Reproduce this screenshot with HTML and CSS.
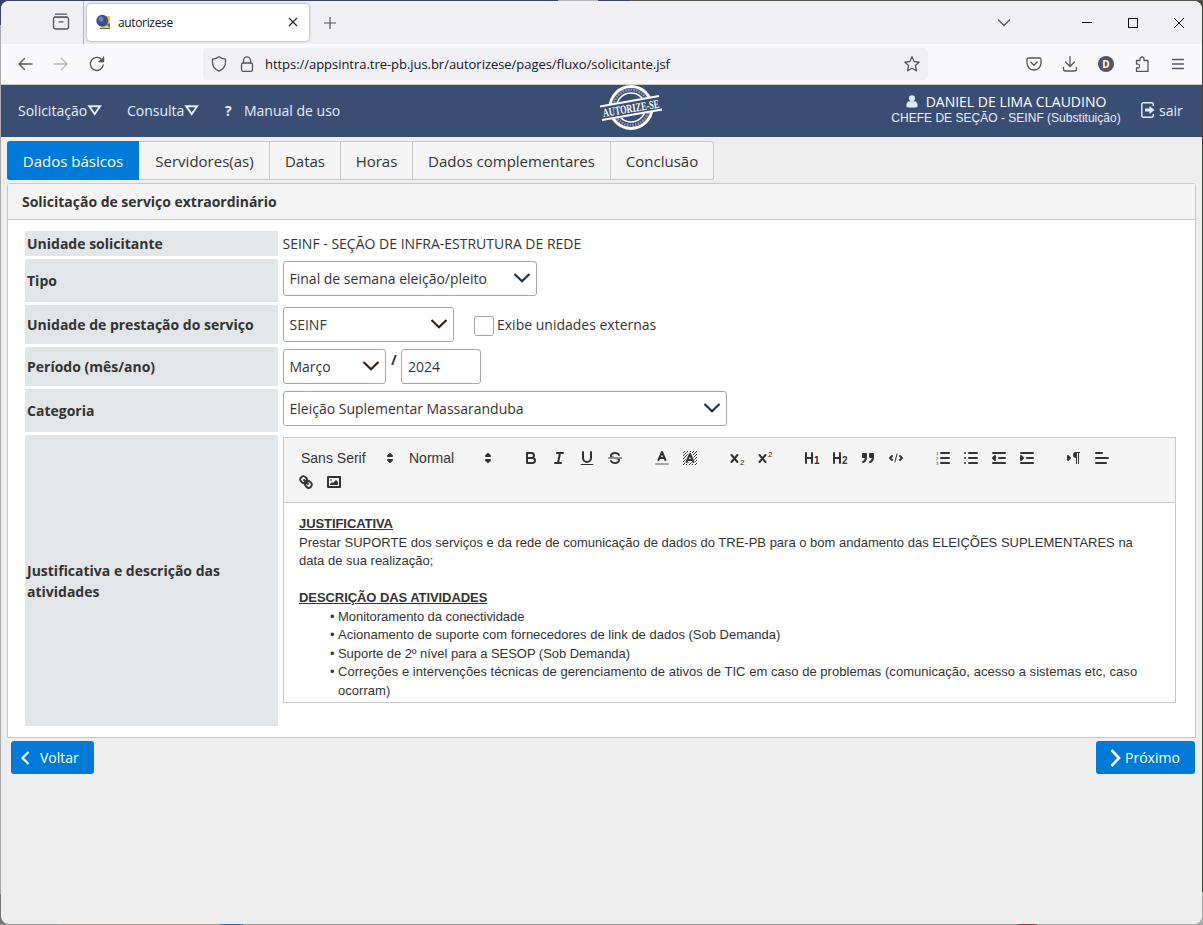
FILE: index.html
```html
<!DOCTYPE html>
<html lang="pt-BR">
<head>
<meta charset="utf-8">
<title>autorizese</title>
<link rel="stylesheet" href="styles.css">
</head>
<body>
<div class="window">
  <header class="tabstrip">
    <div class="tabview"><svg width="18" height="18" viewBox="0 0 18 18" class="ln"><path d="M3.500 1.200h11M2.500 4.200h13"/><rect x="1.500" y="4.200" width="15" height="11.800" rx="2"/><path d="M7 8.800h4"/></svg></div>
    <div class="browser-tab">
      <svg width="16" height="16" viewBox="0 0 16 16"><path d="M8 2h6v10H8z" fill="#f6ce26"/><path d="M4 14l10-5v6H4z" fill="#59705f"/><path d="M5 12l6-1 3 3H5z" fill="#f6ce26"/><circle cx="6.300" cy="6.700" r="6" fill="#3d4f93"/><circle cx="5" cy="5" r="2.500" fill="#7180b5"/></svg>
      <span class="tab-name">autorizese</span>
      <svg class="tab-x" width="10" height="10" viewBox="0 0 10 10"><path d="M1 1l8 8M9 1l-8 8" stroke="#222" stroke-width="1.100"/></svg>
    </div>
    <svg class="plus" width="12" height="12" viewBox="0 0 12 12"><path d="M6 0v12M0 6h12" stroke="#55555f" stroke-width="1.200"/></svg>
    <div class="window-controls">
      <svg width="14" height="8" viewBox="0 0 14 8" class="ln"><path d="M1.500 1l5.500 5.500L12.500 1"/></svg>
      <svg width="12" height="12" viewBox="0 0 12 12"><path d="M1 5.500h10" stroke="#111"/></svg>
      <svg width="12" height="12" viewBox="0 0 12 12"><rect x="1.500" y="1.500" width="9" height="9" fill="none" stroke="#111"/></svg>
      <svg width="12" height="12" viewBox="0 0 12 12"><path d="M1 1l10 10M11 1L1 11" stroke="#111" stroke-width="1"/></svg>
    </div>
  </header>
  <div class="toolbar">
    <div class="navigation">
      <svg width="16" height="16" viewBox="0 0 16 16" class="ln"><path d="M15 8H2M7.500 2.500L2 8l5.500 5.500"/></svg>
      <svg width="16" height="16" viewBox="0 0 16 16" class="ln faded"><path d="M1 8h13M8.500 2.500L14 8l-5.500 5.500"/></svg>
      <svg width="16" height="16" viewBox="0 0 16 16" class="ln"><path d="M14.300 9A6.500 6.500 0 1 1 12.800 3.700M14.500 1v4.500H10"/><path d="M14.500 2v3.500H11z" fill="#55555f"/></svg>
    </div>
    <div class="address">
      <svg width="16" height="16" viewBox="0 0 16 16" class="ln"><path d="M8 .8c2.200 1.700 4.400 2.200 6.500 2.400v3.300c0 4.300-2.500 6.900-6.500 8.700-4-1.800-6.500-4.400-6.500-8.700V3.200C3.600 3 5.800 2.500 8 .8z"/></svg>
      <svg width="16" height="16" viewBox="0 0 16 16" class="ln"><rect x="2.500" y="7" width="11" height="8.300" rx="1.600"/><path d="M4.500 7V4.400a3.500 3.500 0 0 1 7 0V7"/></svg>
      <span class="url">https://appsintra.tre-pb.jus.br/autorizese/pages/fluxo/solicitante.jsf</span>
      <svg class="ln star" width="16" height="16" viewBox="0 0 16 16"><path d="M8 .8l2.200 4.700 5.100.6-3.800 3.500 1 5.200L8 12.300l-4.500 2.500 1-5.200L.7 6.100l5.100-.6z"/></svg>
    </div>
    <div class="actions">
      <svg width="16" height="16" viewBox="0 0 16 16" class="ln"><path d="M2.500 2h11a1.500 1.500 0 0 1 1.500 1.500V7a7 7 0 0 1-14 0V3.500A1.500 1.500 0 0 1 2.500 2zM4.800 6L8 9.200 11.200 6"/></svg>
      <svg width="16" height="16" viewBox="0 0 16 16" class="ln"><path d="M8 0v10.500M3.500 6L8 10.500 12.500 6M1.500 11.500V13a2 2 0 0 0 2 2h9a2 2 0 0 0 2-2v-1.500"/></svg>
      <span class="avatar">D</span>
      <svg width="16" height="16" viewBox="0 0 16 16" class="ln"><path d="M2.500 4.500H6V3a2 2 0 0 1 4 0v1.500h4v11H2.500V12h1.200a1.900 1.900 0 0 0 0-3.800H2.500z"/></svg>
      <svg width="16" height="16" viewBox="0 0 16 16" class="ln"><path d="M2.500 3.500h11M2.500 8h11M2.500 12.500h11"/></svg>
    </div>
  </div>

  <nav class="menu">
    <a class="m1"><span>Solicitação</span><svg width="15" height="11" viewBox="0 0 15 11"><path d="M2.200 1.200h10.900L7.700 9z" fill="none" stroke="#e1eff9" stroke-width="1.900"/></svg></a>
    <a class="m2"><span>Consulta</span><svg width="15" height="11" viewBox="0 0 15 11"><path d="M2.200 1.200h10.900L7.700 9z" fill="none" stroke="#e1eff9" stroke-width="1.900"/></svg></a>
    <a class="m3"><b>?</b><span>Manual de uso</span></a>
    <svg class="stamp" width="66" height="52" viewBox="598 84 66 52">
      <g fill="none" stroke="#fff"><circle cx="631" cy="107.500" r="21" stroke-width="2.900"/><circle cx="631" cy="107.500" r="14.500" stroke-width="1.600"/><circle cx="631" cy="107.500" r="17.700" stroke-width="2.600" stroke-dasharray="1.500 1 2 1" opacity=".4"/></g>
      <path d="M599 106l61-11 3 15-61 11z" fill="#3a4e74"/>
      <path d="M600 106.500l59-10.500M602 120l60-10.500" stroke="#fff" stroke-width="2"/>
      <text x="631" y="112.300" text-anchor="middle" textLength="57" lengthAdjust="spacingAndGlyphs" transform="rotate(-9.500 631 108)">AUTORIZE-SE</text>
    </svg>
    <div class="user">
      <div class="person"><svg width="12" height="13" viewBox="0 0 12 13"><circle cx="6" cy="3.300" r="3.100"/><path d="M.5 12V9.500Q.7 6.500 3.500 6.200h5q2.800.3 3 3.300V12q-5.500 1-11 0z"/></svg><span>DANIEL DE LIMA CLAUDINO</span></div>
      <div class="role">CHEFE DE SEÇÃO - SEINF (Substituição)</div>
    </div>
    <a class="exit"><svg width="14" height="16" viewBox="0 0 14 16"><path d="M12.300 4V2.300A1.500 1.500 0 0 0 10.800.8H2.300A1.500 1.500 0 0 0 .8 2.300v11.400a1.500 1.500 0 0 0 1.500 1.500h8.500a1.500 1.500 0 0 0 1.500-1.500V12" fill="none" stroke="#e1eff9" stroke-width="1.400"/><path d="M4 6.500h4.500V4L13.500 8l-5 4V9.500H4z" fill="#e1eff9"/></svg><span>sair</span></a>
  </nav>

  <main>
    <ul class="steps">
      <li class="active">Dados básicos</li><li class="s2">Servidores(as)</li><li class="s3">Datas</li><li class="s4">Horas</li><li class="s5">Dados complementares</li><li class="s6">Conclusão</li>
    </ul>
    <section class="panel">
      <h1>Solicitação de serviço extraordinário</h1>
      <div class="form">
        <div class="label">Unidade solicitante</div><div class="value plain"><span>SEINF - SEÇÃO DE INFRA-ESTRUTURA DE REDE</span></div>
        <div class="label">Tipo</div><div class="value"><div class="select w-type"><span>Final de semana eleição/pleito</span><svg class="chev" width="18" height="12" viewBox="0 0 18 12"><path d="M1.500 2L9 9.300 16.500 2"/></svg></div></div>
        <div class="label">Unidade de prestação do serviço</div><div class="value"><div class="select w-unit"><span>SEINF</span><svg class="chev brown" width="18" height="12" viewBox="0 0 18 12"><path d="M1.500 2L9 9.300 16.500 2"/></svg></div><i class="check"></i><span>Exibe unidades externas</span></div>
        <div class="label">Período (mês/ano)</div><div class="value"><div class="select w-month"><span>Março</span><svg class="chev brown" width="18" height="12" viewBox="0 0 18 12"><path d="M1.500 2L9 9.300 16.500 2"/></svg></div><b class="slash">/</b><div class="select w-year"><span>2024</span></div></div>
        <div class="label">Categoria</div><div class="value"><div class="select w-cat"><span>Eleição Suplementar Massaranduba</span><svg class="chev" width="18" height="12" viewBox="0 0 18 12"><path d="M1.500 2L9 9.300 16.500 2"/></svg></div></div>
        <div class="label tall">Justificativa e descrição das atividades</div>
        <div class="value top">
          <div class="editor">
            <div class="tools">
              <div class="row">
                <div class="picker font"><span>Sans Serif</span><svg viewBox="0 0 18 18"><path class="f" d="M7 11l2 2 2-2zM7 7l2-2 2 2z"/></svg></div>
                <div class="picker size"><span>Normal</span><svg viewBox="0 0 18 18"><path class="f" d="M7 11l2 2 2-2zM7 7l2-2 2 2z"/></svg></div>
                <div class="group g1">
                  <svg viewBox="0 0 18 18"><path d="M5 4h4.500a2.500 2.500 0 0 1 0 5H5zM5 9h5.500a2.500 2.500 0 0 1 0 5H5z"/></svg>
                  <svg viewBox="0 0 18 18"><path d="M7 4h6M5 14h6M8 14l2-10"/></svg>
                  <svg viewBox="0 0 18 18"><path d="M5 3v6a4 4 0 0 0 8 0V3"/><path class="t" d="M3 15.500h12"/></svg>
                  <svg viewBox="0 0 18 18"><path class="t" d="M2.500 9h13"/><path class="n" d="M9.007 8C6.542 7.791 6 7.519 6 6.500 6 5.792 7.283 5 9 5c1.571 0 2.765.679 2.969 1.309a1 1 0 0 0 1.900-.617C13.356 4.106 11.354 3 9 3 6.200 3 4 4.538 4 6.500a3.200 3.200 0 0 0 .5 1.843ZM8.984 10C11.457 10.208 12 10.479 12 11.500c0 .708-1.283 1.500-3 1.500-1.571 0-2.765-.679-2.969-1.309a1 1 0 1 0-1.900.617C4.644 13.894 6.646 15 9 15c2.800 0 5-1.538 5-3.500a3.200 3.200 0 0 0-.5-1.843Z"/></svg>
                </div>
                <div class="group g2">
                  <svg viewBox="0 0 18 18"><path d="M3 15h12" opacity=".4"/><path d="M5.500 11L9 3l3.500 8M11.630 9H6.380"/></svg>
                  <svg viewBox="0 0 18 18"><defs><pattern id="hatch" width="3" height="3" patternUnits="userSpaceOnUse"><path class="t" d="M-1 1l2-2M0 3l3-3M2 4l2-2"/></pattern></defs><rect x="2" y="2" width="14" height="14" class="hatch"/><path d="M5.500 13L9 5l3.500 8M11.630 11H6.380" class="halo"/><path d="M5.500 13L9 5l3.500 8M11.630 11H6.380"/></svg>
                </div>
                <div class="group g3">
                  <svg viewBox="0 0 18 18"><path d="M3.500 6l6 7M9.500 6l-6 7"/><text class="tiny" x="12" y="16">2</text></svg>
                  <svg viewBox="0 0 18 18"><path d="M3.500 6l6 7M9.500 6l-6 7"/><text class="tiny" x="12" y="8">2</text></svg>
                </div>
                <div class="group g4">
                  <svg viewBox="0 0 18 18"><path d="M3 4v10M9 4v10M3 9h6"/><text class="hn" x="11" y="15">1</text></svg>
                  <svg viewBox="0 0 18 18"><path d="M3 4v10M9 4v10M3 9h6"/><text class="hn" x="11" y="15">2</text></svg>
                  <svg viewBox="0 0 18 18"><path class="f" d="M4 5h3v3H4zM11 5h3v3h-3zM7 8c0 4.031-3 5-3 5M14 8c0 4.031-3 5-3 5"/></svg>
                  <svg viewBox="0 0 18 18"><path d="M5 7L3 9l2 2M13 7l2 2-2 2"/><path class="t" d="M10 5L8 13"/></svg>
                </div>
                <div class="group g5">
                  <svg viewBox="0 0 18 18"><path d="M7 4h8M7 9h8M7 14h8"/><text class="num" x="2" y="5.500">1</text><text class="num" x="2" y="10.600">2</text><text class="num" x="2" y="15.700">3</text></svg>
                  <svg viewBox="0 0 18 18"><path d="M7 4h8M7 9h8M7 14h8M3 4h.01M3 9h.01M3 14h.01"/></svg>
                  <svg viewBox="0 0 18 18"><path d="M3 14h12M3 4h12M9 9h6"/><path class="f" d="M5 7v4L3 9z"/></svg>
                  <svg viewBox="0 0 18 18"><path d="M3 14h12M3 4h12M9 9h6"/><path class="f" d="M3 7v4l2-2z"/></svg>
                </div>
                <div class="group g6">
                  <svg viewBox="0 0 18 18"><path class="f" d="M3 11l2-2-2-2z"/><path class="n" d="M11 3a3 3 0 0 0 0 6v6h1V4h1v11h1V4h1V3z"/></svg>
                  <svg viewBox="0 0 18 18"><path d="M3 9h12M3 14h10M3 4h6"/></svg>
                </div>
              </div>
              <div class="row group">
                <svg viewBox="0 0 18 18"><path d="M7 7l4 4M8.900 4.577a3.476 3.476 0 0 1 .36 4.679A3.476 3.476 0 0 1 4.577 8.900C3.185 7.500 2.035 6.400 4.217 4.217S7.500 3.185 8.900 4.577ZM13.423 9.100a3.476 3.476 0 0 0-4.679-.36 3.476 3.476 0 0 0 .36 4.679c1.392 1.392 2.500 2.542 4.679.36S14.815 10.500 13.423 9.100Z"/></svg>
                <svg viewBox="0 0 18 18"><path d="M3 4h12v10H3z"/><path class="n" d="M5 12v-1l2-2 1 1 3-3 2 2v3zM5 6.500h2v1H5z"/></svg>
              </div>
            </div>
            <div class="text">
              <p class="heading"><b><u>JUSTIFICATIVA</u></b></p>
              <p>Prestar SUPORTE dos serviços e da rede de comunicação de dados do TRE-PB para o bom andamento das ELEIÇÕES SUPLEMENTARES na<br>data de sua realização;</p>
              <p><br></p>
              <p class="heading"><b><u>DESCRIÇÃO DAS ATIVIDADES</u></b></p>
              <ul>
                <li class="tight">Monitoramento da conectividade</li>
                <li>Acionamento de suporte com fornecedores de link de dados (Sob Demanda)</li>
                <li class="tight">Suporte de 2º nível para a SESOP (Sob Demanda)</li>
                <li class="loose">Correções e intervenções técnicas de gerenciamento de ativos de TIC em caso de problemas (comunicação, acesso a sistemas etc, caso<br>ocorram)</li>
              </ul>
            </div>
          </div>
        </div>
      </div>
    </section>
    <div class="buttons">
      <button class="back"><svg width="9" height="14" viewBox="0 0 9 14"><path d="M7.500 1L1.500 7l6 6"/></svg><span>Voltar</span></button>
      <button class="next"><svg width="11" height="18" viewBox="0 0 11 18"><path d="M1.500 1L9 9l-7.500 8"/></svg><span>Próximo</span></button>
    </div>
  </main>
</div>
</body>
</html>
```
FILE: styles.css
```css
* { box-sizing: border-box; }
body {
  margin: 0; width: 1203px; height: 925px; padding: 1px; overflow: hidden;
  font: 14px "Open Sans", "Noto Sans", sans-serif; color: #333;
  background:
    linear-gradient(90deg, #3b4467 0 558px, #b9b5b8 558px 598px, #3b4467 598px 630px, #57524e 630px) 0 0 / 100% 1px no-repeat,
    linear-gradient(90deg, #999 0 58px, #a09d8d 58px 220px, #3570a0 220px 243px, #999 243px 1018px, #ad3349 1018px 1037px, #aaa 1037px) 0 100% / 100% 1px no-repeat,
    linear-gradient(#3b4467 0 25px, #aaa 25px 894px, #777 894px) 0 0 / 8px 100% no-repeat,
    linear-gradient(#3e403a 0 892px, #aaa 892px) 100% 0 / 8px 100% no-repeat;
}
.window { width: 1201px; height: 923px; border-radius: 8px; overflow: hidden; background: #eee; }
svg { display: block; flex: none; }
.ln { fill: none; stroke: #55555f; stroke-width: 1.3; stroke-linecap: round; stroke-linejoin: round; }
.faded { opacity: .4; }

/* Browser chrome */
.tabstrip { display: flex; align-items: center; height: 43px; background: #f0eff4; }
.tabview { width: 83px; height: 43px; padding: 12px 0 0 51px; border-right: 1px solid #b6b5ba; }
.browser-tab { display: flex; align-items: center; width: 222px; height: 37px; margin: 0 0 1px 3px; padding: 0 11px 0 9px; background: #fff; border-radius: 4px; box-shadow: 0 0 3px rgba(0,0,0,.4); }
.tab-name { margin-left: 6px; font-size: 12px; color: #15141a; letter-spacing: -.35px; }
.tab-x { margin-left: auto; }
.plus { margin-left: 15px; }
.window-controls { display: flex; align-items: center; gap: 34px; margin-left: auto; padding-right: 17px; }
.window-controls svg:first-child { margin-right: 36px; }
.toolbar { display: flex; align-items: center; height: 41px; background: #f9f9fb; border-bottom: 1px solid #ccccca; }
.navigation { display: flex; gap: 20px; width: 202px; padding-left: 16px; }
.address { display: flex; align-items: center; width: 725px; height: 32px; padding: 0 8px; background: #f0eff4; border-radius: 4px; }
.address svg + svg { margin-left: 12px; }
.url { margin-left: 10px; font-size: 13px; letter-spacing: -.04px; color: #15141a; white-space: nowrap; }
.address .star { margin-left: auto; }
.actions { display: flex; gap: 20px; margin-left: auto; padding-right: 16px; }
.avatar { width: 16px; height: 16px; border-radius: 50%; background: #55555f; color: #fff; font: bold 10px/16px "Open Sans", sans-serif; text-align: center; }

/* Application menu */
.menu { display: flex; align-items: center; height: 52px; padding-bottom: 2px; background: #3a4e74; color: #e1eff9; white-space: nowrap; }
.menu a { display: flex; align-items: center; }
.m1 { width: 109px; margin-left: 17px; }
.m2 { width: 98px; }
.m3 b { width: 19px; }
.m3 { width: 373px; }
.stamp { overflow: visible; margin-bottom: 1px; }
.stamp text { font: bold 12px "Liberation Serif", serif; fill: #fff; }
.user { display: flex; flex-direction: column; align-items: center; width: 230px; margin: -1px 0 0 227px; }
.person { display: flex; align-items: center; gap: 8px; height: 17px; color: #fff; }
.person svg { fill: #d7eaf8; }
.role { font: 12px/16px "Liberation Sans", sans-serif; letter-spacing: .02px; }
.exit { gap: 4px; margin-left: 20px; }

/* Wizard */
main { padding: 4px 6px 0; }
.steps { display: flex; width: 707px; height: 39px; margin: 0 0 3px; padding: 0; list-style: none; font-size: 15px; }
.steps li { display: flex; align-items: center; justify-content: center; background: #f4f4f4; border: 1px solid #c8c8c8; border-left-width: 0; white-space: nowrap; }
.steps .active { width: 132px; padding-left: 1px; background: #007ad9; border-color: #007ad9; color: #fff; border-radius: 3px 0 0 3px; }
.steps .s2 { width: 131px; padding-left: 1px; } .steps .s3 { width: 71px; } .steps .s4 { width: 72px; } .steps .s5 { width: 198px; } .steps .s6 { width: 103px; border-radius: 0 3px 3px 0; }
.panel { height: 555px; border: 1px solid #c8c8c8; border-radius: 3px 3px 0 0; background: #fff; }
h1 { height: 36px; margin: 0; padding-left: 14px; background: #f4f4f4; border-bottom: 1px solid #c8c8c8; font-size: 14px; line-height: 36px; letter-spacing: -.02px; }
.form { display: grid; grid-template-columns: 253px 893px; grid-template-rows: 25px 43px 39px 39px 43px 291px; gap: 3px 5px; padding: 11px 0 0 17px; }
.label { display: flex; align-items: center; padding-left: 2px; background: #e2e6e9; font-weight: bold; line-height: 21px; }
.label.tall { padding-right: 40px; }
.value { display: flex; padding-top: 2px; }
.value > span { line-height: 35px; white-space: nowrap; }
.plain { align-items: center; padding: 0; margin-left: -.5px; }
.select { display: flex; align-items: center; justify-content: space-between; height: 35px; padding: 0 5px 0 5.5px; border: 1px solid #a6a6a6; border-radius: 3px; white-space: nowrap; }
.w-type { width: 254px; } .w-unit { width: 171px; } .w-month { width: 103px; } .w-year { width: 80px; padding-left: 6px; } .w-cat { width: 444px; }
.chev { margin-bottom: 1px; fill: none; stroke: #1f303f; stroke-width: 2.2; }
.brown { stroke: #3a2018; }
.check { width: 20px; height: 20px; margin: 9px 3px 0 20px; border: 1px solid #a6a6a6; border-radius: 3px; }
.slash { width: 15px; padding: 1px 0 0 5px; }

/* Rich text editor */
.editor { width: 893px; height: 266px; border: 1px solid #c8c8c8; }
.tools { height: 65px; padding: 8px; background: #f4f4f4; border-bottom: 1px solid #c8c8c8; }
.row { display: flex; height: 24px; }
.tools svg { width: 28px; height: 18px; margin-top: 3px; fill: none; stroke: #333; stroke-width: 2; stroke-linecap: round; stroke-linejoin: round; }
.tools .t { stroke-width: 1; }
.tools .f { fill: #333; }
.tools .n { fill: #333; stroke: none; }
.tools .hatch { fill: url(#hatch); stroke: none; }
.tools .halo { stroke: #f4f4f4; stroke-width: 4; }
.tools text { stroke: none; fill: #333; font-family: "Liberation Sans", sans-serif; }
.tools .tiny { font-size: 8px; }
.tools .hn { font-size: 10px; font-weight: bold; }
.tools .num { font-size: 4.300px; }
.group { display: flex; }
.g1 { margin-left: 20px; } .g2 { margin-left: 19px; } .g3, .g4 { margin-left: 19px; } .g5 { margin-left: 19px; } .g6 { margin-left: 19px; }
.picker { display: flex; justify-content: space-between; padding-left: 8px; font: 14px/24px "Liberation Sans", sans-serif; }
.picker .tools svg, .row .picker svg { width: 18px; }
.font { width: 107px; padding-left: 9px; }
.size { width: 98px; padding-left: 10px; }
.text { padding: 12px 15px; font: 13px/18.500px "Liberation Sans", sans-serif; white-space: nowrap; }
.text p { margin: 0; }
.text .heading { letter-spacing: -.07px; }
.text ul { margin: 0; padding-left: 39px; list-style: none; }
.text li::before { content: "•"; display: inline-block; width: 8px; margin-left: -8px; }
.tight { letter-spacing: -.05px; }
.loose { letter-spacing: .035px; }

/* Wizard actions */
.buttons { display: flex; justify-content: space-between; padding: 3px 1px 0 4px; }
button { display: flex; align-items: center; height: 33px; padding: 0; border: 0; border-radius: 3px; background: #007ad9; color: #fff; font: 14px "Open Sans", sans-serif; }
button svg { fill: none; stroke: #fff; stroke-width: 2.2; }
.back { width: 83px; padding-left: 10px; gap: 10px; }
.next { width: 99px; padding-left: 14px; gap: 4px; }
.next svg { stroke-width: 2.6; }
```
